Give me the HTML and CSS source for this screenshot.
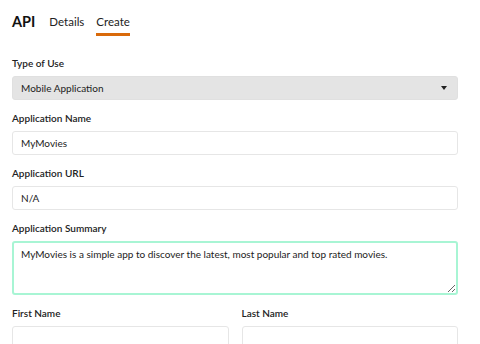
FILE: index.html
```html
<!DOCTYPE html>
<html lang="en">
<head>
    <meta charset="UTF-8">
    <meta name="viewport" content="width=device-width, initial-scale=1.0">
    <title>API - Create</title>
    <link rel="stylesheet" href="styles.css">
</head>
<body>
    <div class="header">
        <h2>API</h2>
        <a class="tab" href="#">Details</a>
        <a class="tab active" href="#">Create</a>
    </div>

    <form class="form">
        <div class="field">
            <label for="use">Type of Use</label>
            <div class="select">
                <span>Mobile Application</span>
                <span class="caret"></span>
            </div>
        </div>

        <div class="field">
            <label for="appName">Application Name</label>
            <input id="appName" type="text" value="MyMovies">
        </div>

        <div class="field">
            <label for="appUrl">Application URL</label>
            <input id="appUrl" type="text" value="N/A">
        </div>

        <div class="field">
            <label for="summary">Application Summary</label>
            <textarea id="summary">MyMovies is a simple app to discover the latest, most popular and top rated movies.</textarea>
        </div>

        <div class="row">
            <div class="field">
                <label for="firstName">First Name</label>
                <input id="firstName" type="text">
            </div>
            <div class="field">
                <label for="lastName">Last Name</label>
                <input id="lastName" type="text">
            </div>
        </div>
    </form>
</body>
</html>
```

FILE: styles.css
```css
*{
    padding: 0;
    margin: 0;
    box-sizing: border-box;
}
body{
    background-color: #fff;
    color: #222;
    font-family: Lato, "Liberation Sans", sans-serif;
    padding: 12px 22px 0 12px;
    overflow: hidden;
}
.header{
    display: flex;
    align-items: flex-start;
    gap: 12px;
    height: 44px;
}
.header h2{
    font-size: 14.5px;
    font-weight: 700;
    line-height: 19px;
    margin-right: 2px;
    color: #111;
}
.tab{
    font-size: 11.5px;
    line-height: 19px;
    color: #222;
    text-decoration: none;
    padding-bottom: 2px;
    border-bottom: 3px solid transparent;
}
.tab.active{
    border-bottom-color: #d96a0b;
}
.form{
    display: flex;
    flex-direction: column;
    gap: 11px;
}
.field{
    display: flex;
    flex-direction: column;
    gap: 6px;
}
label{
    font-size: 10px;
    font-weight: 600;
    line-height: 14px;
    color: #222;
}
.select, input, textarea{
    font-family: inherit;
    font-size: 10px;
    color: #222;
    border: 1px solid #e6e6e6;
    border-radius: 3px;
    padding: 0 8px;
    height: 24px;
    width: 100%;
}
.select{
    background-color: #e4e4e4;
    border-color: #e0e0e0;
    display: flex;
    align-items: center;
    justify-content: space-between;
}
.caret{
    width: 0;
    height: 0;
    border-left: 3px solid transparent;
    border-right: 3px solid transparent;
    border-top: 4px solid #222;
    margin-right: 2px;
}
textarea{
    height: 54px;
    border: 2px solid #a8f5d4;
    padding: 4px 7px;
    line-height: 14px;
    resize: vertical;
    outline: none;
}
.row{
    display: grid;
    grid-template-columns: 1fr 1fr;
    gap: 13px;
}
```
